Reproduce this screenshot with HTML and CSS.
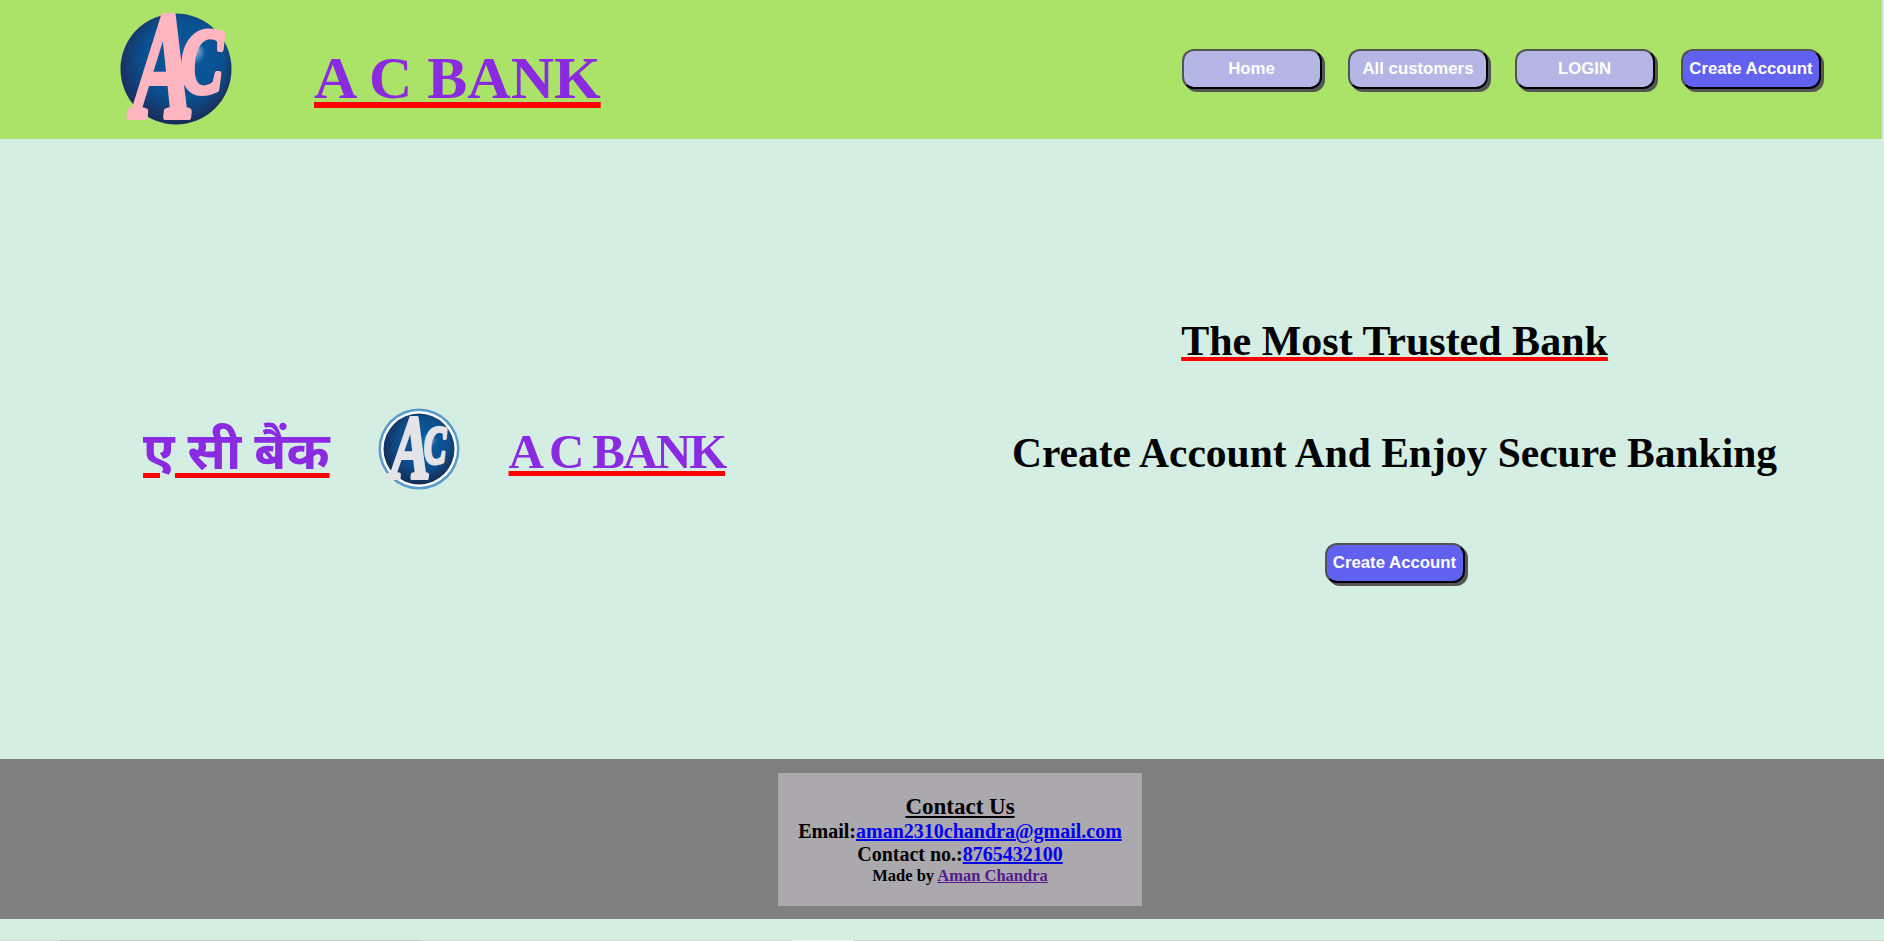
FILE: index.html
```html
<!DOCTYPE html>
<html lang="en">
<head>
<meta charset="utf-8">
<title>A C BANK</title>
<link rel="stylesheet" href="styles.css">
</head>
<body>
<header class="topbar">
  <div class="brand">
    <svg class="logo-top" viewBox="0 0 112 112" role="img" aria-label="AC logo">
      <defs>
        <radialGradient id="ballA" cx="0.5" cy="0.45" r="0.56" fx="0.69" fy="0.33">
          <stop offset="0" stop-color="#8fb4d2"/>
          <stop offset="0.2" stop-color="#0a5698"/>
          <stop offset="0.65" stop-color="#0a4f8f"/>
          <stop offset="1" stop-color="#1c2a55"/>
        </radialGradient>
      </defs>
      <circle cx="56" cy="56" r="55.5" fill="url(#ballA)"/>
      <text class="mono mono-pink mono-a" transform="translate(13 104) scale(.58 .98)">A</text>
      <text class="mono mono-pink mono-c" transform="translate(61 79) scale(.68 1)">C</text>
    </svg>
    <h1 class="brand-title">A C BANK</h1>
  </div>
  <nav class="nav">
    <a class="btn" href="#">Home</a>
    <a class="btn" href="#">All customers</a>
    <a class="btn" href="#">LOGIN</a>
    <a class="btn btn-active" href="#">Create Account</a>
  </nav>
</header>
<main class="hero">
  <section class="hero-left">
    <h2 class="hero-name">ए सी बैंक</h2>
    <svg class="logo-round" viewBox="0 0 82 82" role="img" aria-label="AC logo">
      <defs>
        <radialGradient id="ballB" cx="0.5" cy="0.45" r="0.56" fx="0.68" fy="0.36">
          <stop offset="0" stop-color="#5d8fbc"/>
          <stop offset="0.2" stop-color="#0a5698"/>
          <stop offset="0.65" stop-color="#0d4d8a"/>
          <stop offset="1" stop-color="#16294f"/>
        </radialGradient>
      </defs>
      <circle cx="41" cy="41" r="40.5" fill="#5a9bc9"/>
      <circle cx="41" cy="41" r="38" fill="#ffffff"/>
      <circle cx="41" cy="41" r="35.5" fill="url(#ballB)"/>
      <text class="mono mono-silver mono-a2" transform="translate(13 70) scale(.62 .96)">A</text>
      <text class="mono mono-silver mono-c2" transform="translate(46 55) scale(.62 1)">C</text>
    </svg>
    <h2 class="hero-name hero-name-en">A C BANK</h2>
  </section>
  <section class="hero-right">
    <h2 class="tagline tagline-under">The Most Trusted Bank</h2>
    <h2 class="tagline tagline-long">Create Account And Enjoy Secure Banking</h2>
    <a class="btn btn-active" href="#">Create Account</a>
  </section>
</main>
<footer class="footer">
  <div class="contact">
    <div class="contact-title">Contact Us</div>
    <div class="contact-line">Email:<a href="#">aman2310chandra@gmail.com</a></div>
    <div class="contact-line">Contact no.:<a href="#">8765432100</a></div>
    <div class="contact-made">Made by <a class="visited" href="#">Aman Chandra</a></div>
  </div>
</footer>
<div class="tail"><div class="tail-edge"></div></div>
</body>
</html>
```
FILE: styles.css
```css
* { box-sizing: border-box; }
html, body { margin: 0; height: 100%; overflow: hidden; }
body {
  background: #d4eee4;
  font-family: "Liberation Serif", "Noto Sans", serif;
  display: flex;
  flex-direction: column;
}
.topbar {
  height: 139px;
  background: #abe268;
  display: flex;
  align-items: flex-start;
  justify-content: space-between;
  padding: 13px 61px 0 120px;
  margin-right: 2px;
}
.brand { display: flex; align-items: flex-start; gap: 82px; }
.logo-top { width: 112px; height: 112px; display: block; }
.brand-title {
  margin: 31px 0 0;
  font-size: 60px;
  line-height: 69px;
  font-weight: 700;
  color: #8a2be2;
  text-decoration: underline #f00 6px;
  text-underline-offset: 4px;
}
.nav { display: flex; gap: 26.5px; margin-top: 36px; }
.btn {
  display: flex;
  align-items: center;
  justify-content: center;
  width: 140px;
  height: 40px;
  border: 2px outset #000;
  border-radius: 12px;
  background: #b5b5e6;
  box-shadow: 3px 3px 0 #555;
  color: #fff;
  font: 700 16.8px "Liberation Sans", Arial, sans-serif;
  text-decoration: none;
  white-space: nowrap;
}
.btn-active { background: #6161f0; }
.hero {
  height: 620px;
  display: flex;
  align-items: center;
}
.hero-left {
  width: 942px;
  padding-left: 143px;
  display: flex;
  align-items: center;
  gap: 48.5px;
}
.hero-name {
  margin: 6px 0 0;
  font-size: 52px;
  line-height: 60px;
  font-weight: 700;
  color: #8a2be2;
  font-family: "Liberation Serif", "Noto Sans Devanagari", "Noto Sans", serif;
  text-decoration: underline #f00 5px;
  text-underline-offset: 4px;
}
.hero-name-en {
  font-size: 49px;
  letter-spacing: -2.2px;
  text-underline-offset: 3px;
}
.logo-round { width: 82px; height: 82px; display: block; }
.hero-right {
  width: 905px;
  padding-top: 2px;
  display: flex;
  flex-direction: column;
  align-items: center;
}
.tagline {
  margin: 0;
  font-size: 42px;
  line-height: 46px;
  font-weight: 700;
  color: #000;
}
.tagline-long { font-size: 41.5px; }
.tagline-under {
  text-decoration: underline #f00 4px;
  text-underline-offset: 2px;
  margin-bottom: 66px;
}
.hero-right .btn { margin-top: 67px; }
.footer {
  height: 160px;
  background: #808080;
  display: flex;
  justify-content: center;
  padding-top: 14px;
}
.contact {
  width: 364px;
  height: 133px;
  background: #aba8ae;
  text-align: center;
  font-weight: 700;
  color: #000;
  padding-top: 21px;
  margin-left: 36px;
}
.contact-title { font-size: 23px; line-height: 25px; text-decoration: underline; }
.contact-line { font-size: 20px; line-height: 24px; }
.contact-line + .contact-line { margin-top: -1px; margin-bottom: 1px; }
.contact a { color: #00e; }
.contact a.visited { color: #551a8b; }
.contact-made { font-size: 16.5px; line-height: 18px; }
.tail { flex: 1; display: flex; flex-direction: column; justify-content: flex-end; }
.tail-edge {
  height: 1px;
  background: linear-gradient(90deg, #d8dcd8 0 60px, #c8cac8 60px 420px, #d4d8d4 420px 792px, #f0f2f0 792px 853px, #d4d6d4 853px);
}
.mono {
  font-family: "Liberation Serif", serif;
  font-style: italic;
  font-weight: 700;
  stroke-linejoin: round;
}
.mono-a { font-size: 157px; }
.mono-c { font-size: 92px; }
.mono-a2 { font-size: 95px; }
.mono-c2 { font-size: 53px; }
.mono-pink { fill: #ffb6c1; stroke: #ffb6c1; stroke-width: 6px; }
.mono-silver { fill: #e4e4e8; stroke: #e4e4e8; stroke-width: 4px; }
```
